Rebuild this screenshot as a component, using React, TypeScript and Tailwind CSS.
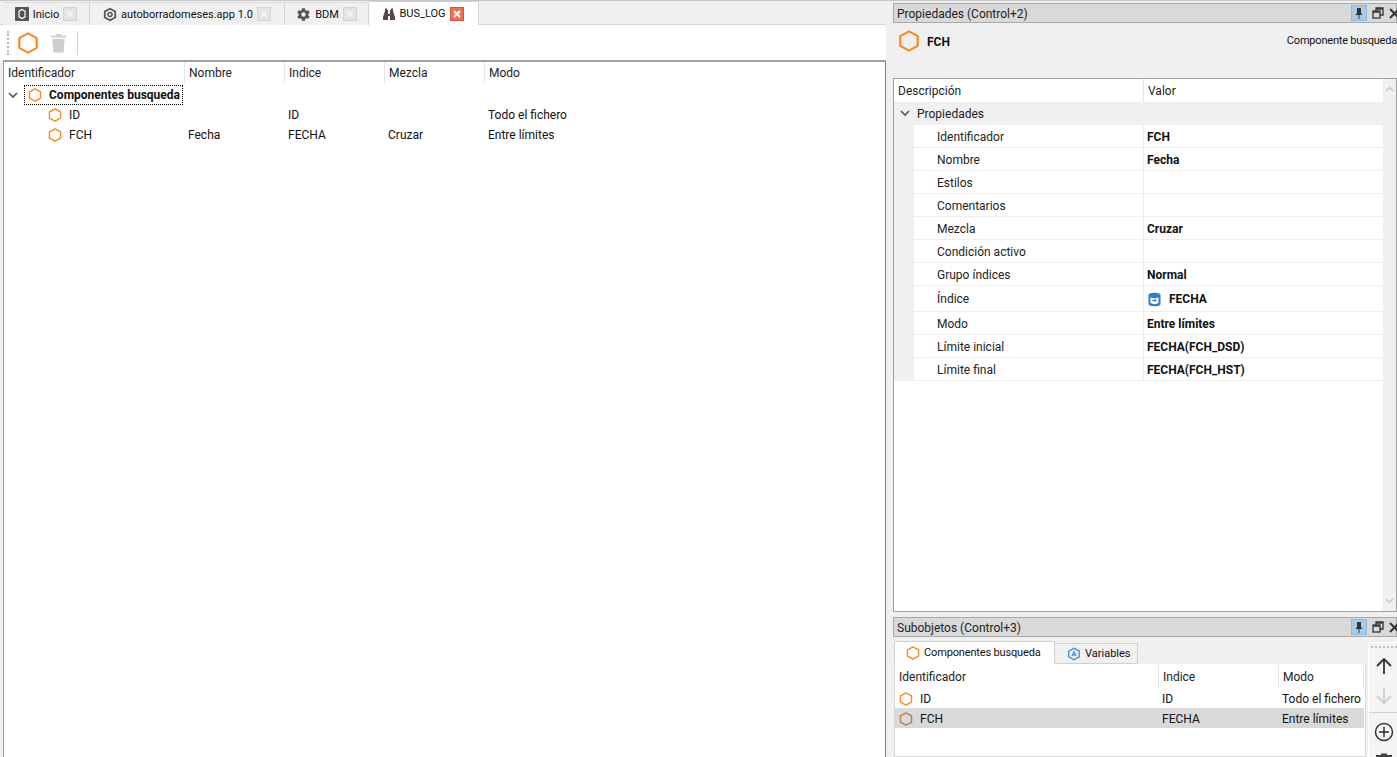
import React from "react";

const Hex = ({ size = 14, color = "#f58a1f", w = 2.400 }: { size?: number; color?: string; w?: number }) => (
  <svg width={size} height={size} viewBox="0 0 24 24" className="shrink-0">
    <path d="M12 1.500 L21.500 6.700 V17.300 L12 22.500 L2.500 17.300 V6.700 Z" fill="none" stroke={color} strokeWidth={w} strokeLinejoin="round" />
  </svg>
);

const CloseBox = ({ active = false }: { active?: boolean }) => (
  <span className={active ? "flex h-[14px] w-[14px] items-center justify-center border border-[#d9533c] bg-[#ee7058]" : "flex h-[14px] w-[14px] items-center justify-center border border-[#d4d4d4] bg-[#e2e2e2]"}>
    <svg width="8" height="8" viewBox="0 0 8 8"><path d="M1 1 L7 7 M7 1 L1 7" stroke={active ? "#ffffff" : "#f4f4f4"} strokeWidth="2" /></svg>
  </span>
);

const Tab = ({ label, icon, width, active = false }: { label: string; icon: React.ReactNode; width: string; active?: boolean }) => (
  <div className={`${width} ${active ? "h-[24px] bg-white border-t border-t-[#d0d0d0]" : "mt-px h-[23px] bg-[#f0f0f0] border-t border-t-[#dcdcdc]"} flex shrink-0 items-center justify-center gap-[4px] border-r border-[#d4d4d4]`}>
    {icon}
    <span className="text-[11px] leading-none text-[#111]">{label}</span>
    <CloseBox active={active} />
  </div>
);

const HeaderCell = ({ label, width, grow = false, last = false }: { label: string; width?: string; grow?: boolean; last?: boolean }) => (
  <div className={`${grow ? "flex-1" : width} ${last ? "" : "border-r border-[#e6e6e6]"} flex h-full shrink-0 items-center pl-[4px] text-[12px] text-[#222]`}>{label}</div>
);

const PinButtons = () => (
  <div className="ml-auto flex items-center gap-[5px]">
    <span className="flex h-[16px] w-[16px] items-center justify-center border border-[#8fb8dc] bg-[#a9cbe8]">
      <svg width="10" height="12" viewBox="0 0 10 12"><path d="M3 1 H7 V6 L8.500 8 H1.500 L3 6 Z M4.500 8 H5.500 V12 H4.500 Z" fill="#333" /></svg>
    </span>
    <svg width="12" height="12" viewBox="0 0 12 12" fill="none" stroke="#333" strokeWidth="1.300"><rect x="1" y="4" width="7" height="7" /><path d="M4 4 V1 H11 V8 H8" /><path d="M1 5 H8 M4 2 H11" /></svg>
    <svg width="11" height="11" viewBox="0 0 11 11" className="mr-[-4px]"><path d="M1 1 L10 10 M10 1 L1 10" stroke="#333" strokeWidth="2" /></svg>
  </div>
);

const TitleBar = ({ title }: { title: string }) => (
  <div className="flex h-[20px] shrink-0 items-center border border-[#a8a8a8] bg-[#d9d9d9] pl-[3px] text-[12px] text-[#222]">
    <span className="pt-px">{title}</span>
    <PinButtons />
  </div>
);

const PropRow = ({ label, value, h = "h-[23px]", icon }: { label: string; value: string; h?: string; icon?: React.ReactNode }) => (
  <div className={`${h} flex shrink-0 items-stretch`}>
    <div className="w-[20px] shrink-0 bg-[#f0f0f0]" />
    <div className="flex w-[230px] shrink-0 items-center border-b border-r border-[#eeeeee] pl-[23px] pt-px text-[12px] text-[#222]">{label}</div>
    <div className="flex flex-1 items-center gap-[7px] border-b border-[#eeeeee] pl-[3px] pt-px text-[12px] font-bold text-[#111]">
      {icon}
      <span>{value}</span>
    </div>
  </div>
);

const Chevron = () => (
  <svg width="10" height="7" viewBox="0 0 10 7" className="shrink-0"><path d="M1 1 L5 5 L9 1" fill="none" stroke="#555" strokeWidth="1.600" /></svg>
);

const TreeRow = ({ cells }: { cells: string[] }) => (
  <div className="flex h-[20px] items-center text-[12px] text-[#111]">
    <div className="flex w-[181px] shrink-0 items-center gap-[7px] pl-[44px]">
      <Hex />
      <span>{cells[0]}</span>
    </div>
    <div className="w-[100px] shrink-0 pl-[3px]">{cells[1]}</div>
    <div className="w-[100px] shrink-0 pl-[3px]">{cells[2]}</div>
    <div className="w-[100px] shrink-0 pl-[3px]">{cells[3]}</div>
    <div className="pl-[3px]">{cells[4]}</div>
  </div>
);

export default function App() {
  return (
    <div className="flex h-[757px] w-[1397px] overflow-hidden border-t border-[#c8c8c8] bg-[#f0f0f0] text-[12px]" style={{ fontFamily: 'Roboto, "Noto Sans", sans-serif' }}>
      {/* Left pane */}
      <div className="flex w-[886px] shrink-0 flex-col">
        <div className="flex h-[24px] shrink-0 items-start border-b border-[#d4d4d4] pl-[3px]">
          <div className="flex">
            <Tab width="w-[87px]" label="Inicio" icon={
              <svg width="14" height="14" viewBox="0 0 14 14"><rect width="14" height="14" rx="1" fill="#555" /><path d="M7 2.500 L10 4.200 V9.800 L7 11.500 L4 9.800 V4.200 Z" fill="none" stroke="#fff" strokeWidth="1.200" /></svg>
            } />
            <Tab width="w-[195px]" label="autoborradomeses.app 1.0" icon={
              <svg width="14" height="15" viewBox="0 0 24 24"><path d="M12 2 L21 7 L21 17 L12 22 L3 17 L3 7 Z" fill="none" stroke="#555" strokeWidth="3" /><circle cx="12" cy="12" r="3.500" fill="none" stroke="#555" strokeWidth="2.500" /></svg>
            } />
            <Tab width="w-[84px]" label="BDM" icon={
              <svg width="15" height="15" viewBox="0 0 24 24"><path fill="#555" d="M19.400 13c.1-.3.100-.7.100-1s0-.7-.1-1l2.100-1.600c.2-.2.300-.4.100-.6l-2-3.500c-.1-.2-.4-.3-.6-.2l-2.500 1c-.5-.4-1.100-.7-1.700-1l-.4-2.600c0-.3-.2-.5-.5-.5h-4c-.3 0-.5.200-.5.500L9 5.100c-.6.300-1.200.6-1.700 1l-2.500-1c-.2-.1-.5 0-.6.200l-2 3.500c-.1.200-.1.500.1.600L4.400 11c0 .3-.1.700-.1 1s0 .7.1 1l-2.100 1.600c-.2.200-.3.400-.1.600l2 3.500c.1.200.4.300.6.200l2.500-1c.5.400 1.100.7 1.700 1l.4 2.600c0 .3.200.5.500.5h4c.3 0 .5-.2.500-.5l.4-2.600c.6-.3 1.200-.6 1.700-1l2.500 1c.2.100.5 0 .6-.2l2-3.500c.1-.2.100-.5-.1-.6L19.400 13zM12 15.500A3.500 3.500 0 1 1 12 8.500a3.500 3.500 0 0 1 0 7z" /></svg>
            } />
            <Tab width="w-[110px]" active label="BUS_LOG" icon={
              <svg width="12" height="12" viewBox="0 0 12 12"><path fill="#5a4540" d="M2 0.500 H4 V2 H5 V6 H7 V2 H8 V0.500 H10 V3 L12 9 V12 H7 V8 H5 V12 H0 V9 L2 3 Z" /></svg>
            } />
          </div>
        </div>
        <div className="flex h-[35px] shrink-0 items-center bg-white pl-[7px]">
          <div className="h-[24px] w-[2px] border-l-2 border-dotted border-[#bbbbbb]" />
          <div className="ml-[8px]"><Hex size={22} w={2.400} /></div>
          <div className="ml-[12px]">
            <svg width="15" height="20" viewBox="0 0 16 20"><path d="M5 0.500 H11 V2 H16 V4 H0 V2 H5 Z M1.500 5.500 H14.500 L13.500 20 H2.500 Z" fill="#cfcfcf" /></svg>
          </div>
          <div className="ml-[11px] h-[24px] w-px bg-[#d0d0d0]" />
        </div>
        <div className="ml-[3px] flex flex-1 flex-col border-l border-r border-t-2 border-[#a0a0a0] border-r-[#808080] bg-white">
          <div className="flex h-[21px] shrink-0 items-center">
            <HeaderCell label="Identificador" width="w-[181px]" />
            <HeaderCell label="Nombre" width="w-[100px]" />
            <HeaderCell label="Indice" width="w-[100px]" />
            <HeaderCell label="Mezcla" width="w-[100px]" />
            <HeaderCell label="Modo" width="w-[100px]" last />
          </div>
          <div className="mt-[2px] flex h-[20px] items-center pl-[4px] text-[12px]">
            <Chevron />
            <div className="ml-[6px] flex h-[20px] w-[159px] items-center gap-[7px] border border-dotted border-black pl-[3px] font-bold text-[#111]">
              <Hex />
              <span className="whitespace-nowrap">Componentes busqueda</span>
            </div>
          </div>
          <TreeRow cells={["ID", "", "ID", "", "Todo el fichero"]} />
          <TreeRow cells={["FCH", "Fecha", "FECHA", "Cruzar", "Entre límites"]} />
        </div>
      </div>

      {/* Right pane */}
      <div className="ml-[7px] flex min-w-0 flex-1 flex-col pt-[2px]">
        <TitleBar title="Propiedades (Control+2)" />
        <div className="flex h-[55px] shrink-0 items-start pl-[5px] pt-[7px]">
          <Hex size={22} w={2.400} />
          <span className="ml-[7px] mt-[3px] font-bold text-[#111]">FCH</span>
          <span className="ml-auto mt-[3px] whitespace-nowrap text-[11px] tracking-[-0.2px] text-[#111]">Componente busqueda</span>
        </div>
        <div className="flex h-[534px] shrink-0 border border-[#a0a0a0] bg-white">
          <div className="flex min-w-0 flex-1 flex-col">
            <div className="flex h-[23px] shrink-0 items-center">
              <HeaderCell label="Descripción" width="w-[250px]" />
              <HeaderCell label="Valor" grow last />
            </div>
            <div className="flex h-[23px] shrink-0 items-center bg-[#f0f0f0] pl-[6px] text-[#222]">
              <Chevron />
              <span className="ml-[7px]">Propiedades</span>
            </div>
            <PropRow label="Identificador" value="FCH" />
            <PropRow label="Nombre" value="Fecha" />
            <PropRow label="Estilos" value="" />
            <PropRow label="Comentarios" value="" />
            <PropRow label="Mezcla" value="Cruzar" />
            <PropRow label="Condición activo" value="" />
            <PropRow label="Grupo índices" value="Normal" />
            <PropRow label="Índice" value="FECHA" h="h-[26px]" icon={
              <svg width="15" height="15" viewBox="0 0 15 15"><path fill="#2a7fd0" d="M1.500 3 C1.500 0 13.500 0 13.500 3 V12 C13.500 15 1.500 15 1.500 12 Z" /><path d="M3.500 5.500 C6 6.500 9 6.500 11.500 5.500 V11 C9 12.500 6 12.500 3.500 11 Z" fill="#fff" /><path d="M5 8.500 H9 M7.500 7 L9 8.500 L7.500 10" stroke="#2a7fd0" strokeWidth="1" fill="none" /></svg>
            } />
            <PropRow label="Modo" value="Entre límites" />
            <PropRow label="Límite inicial" value="FECHA(FCH_DSD)" />
            <PropRow label="Límite final" value="FECHA(FCH_HST)" />
          </div>
          <div className="flex w-[13px] shrink-0 flex-col items-center justify-between bg-[#f0f0f0] py-[7px]">
            <svg width="9" height="6" viewBox="0 0 9 6"><path d="M1 5 L4.500 1.500 L8 5" fill="none" stroke="#c8c8c8" strokeWidth="1.500" /></svg>
            <svg width="9" height="6" viewBox="0 0 9 6"><path d="M1 1 L4.500 4.500 L8 1" fill="none" stroke="#c8c8c8" strokeWidth="1.500" /></svg>
          </div>
        </div>
        <div className="mt-[5px]"><TitleBar title="Subobjetos (Control+3)" /></div>
        <div className="flex min-h-0 flex-1 pl-px pt-[4px]">
          <div className="flex w-[472px] shrink-0 flex-col">
            <div className="flex h-[23px] shrink-0 items-end">
              <div className="flex h-[23px] w-[161px] items-center gap-[4px] border border-b-0 border-[#d0d0d0] bg-white pl-[11px] text-[11px] text-[#111]">
                <Hex />
                <span className="whitespace-nowrap pt-px tracking-[-0.15px]">Componentes busqueda</span>
              </div>
              <div className="flex h-[21px] w-[83px] items-center gap-[4px] border-r border-t border-b border-[#d0d0d0] bg-[#f0f0f0] pl-[12px] text-[11px] text-[#111]">
                <svg width="14" height="14" viewBox="0 0 24 24"><path d="M12 2 L21 7 L21 17 L12 22 L3 17 L3 7 Z" fill="none" stroke="#3d8fd9" strokeWidth="2.200" /><path d="M8.500 16 L12 8 L15.500 16 M10 13.500 H14" fill="none" stroke="#3d8fd9" strokeWidth="1.800" /></svg>
                <span className="pt-px">Variables</span>
              </div>
            </div>
            <div className="flex flex-1 flex-col border border-t-0 border-[#d8d8d8] bg-white">
              <div className="flex h-[24px] shrink-0 items-center pt-px">
                <HeaderCell label="Identificador" width="w-[264px]" />
                <HeaderCell label="Indice" width="w-[120px]" />
                <HeaderCell label="Modo" width="w-[85px]" />
              </div>
              <div className="flex h-[20px] w-[469px] shrink-0 items-center pt-px text-[#111]">
                <div className="flex w-[264px] items-center gap-[7px] pl-[4px]"><Hex /><span>ID</span></div>
                <div className="w-[120px] pl-[3px]">ID</div>
                <div className="whitespace-nowrap pl-[3px]">Todo el fichero</div>
              </div>
              <div className="flex h-[20px] w-[469px] shrink-0 items-center bg-[#d9d9d9] pt-px text-[#111]">
                <div className="flex w-[264px] items-center gap-[7px] pl-[4px]"><Hex color="#b5814f" /><span>FCH</span></div>
                <div className="w-[120px] pl-[3px]">FECHA</div>
                <div className="whitespace-nowrap pl-[3px]">Entre límites</div>
              </div>
            </div>
          </div>
          <div className="ml-[2px] mt-px flex flex-1 flex-col items-center overflow-hidden border-l border-t border-white bg-[#f4f4f4] pl-[2px]">
            <div className="mt-[3px] h-[2px] w-[26px] shrink-0 border-t-2 border-dotted border-[#c0c0c0]" />
            <svg className="mt-[9px] shrink-0" width="18" height="18" viewBox="0 0 18 18"><path d="M9 17 V2 M2 9 L9 2 L16 9" fill="none" stroke="#333" strokeWidth="1.800" /></svg>
            <svg className="mt-[12px] shrink-0" width="18" height="18" viewBox="0 0 18 18"><path d="M9 1 V16 M2 9 L9 16 L16 9" fill="none" stroke="#cfcfcf" strokeWidth="1.800" /></svg>
            <div className="ml-[-2px] mt-[7px] h-px w-[calc(100%+2px)] shrink-0 bg-[#d0d0d0]" />
            <svg className="mt-[9px] shrink-0" width="20" height="20" viewBox="0 0 20 20"><circle cx="10" cy="10" r="8.500" fill="none" stroke="#333" strokeWidth="1.500" /><path d="M10 5 V15 M5 10 H15" stroke="#333" strokeWidth="1.500" /></svg>
            <svg className="mt-[11px] shrink-0" width="16" height="20" viewBox="0 0 16 20"><path d="M5 0.500 H11 V2 H16 V4 H0 V2 H5 Z M1.500 5.500 H14.500 L13.500 20 H2.500 Z" fill="#444" /></svg>
          </div>
        </div>
      </div>
    </div>
  );
}
